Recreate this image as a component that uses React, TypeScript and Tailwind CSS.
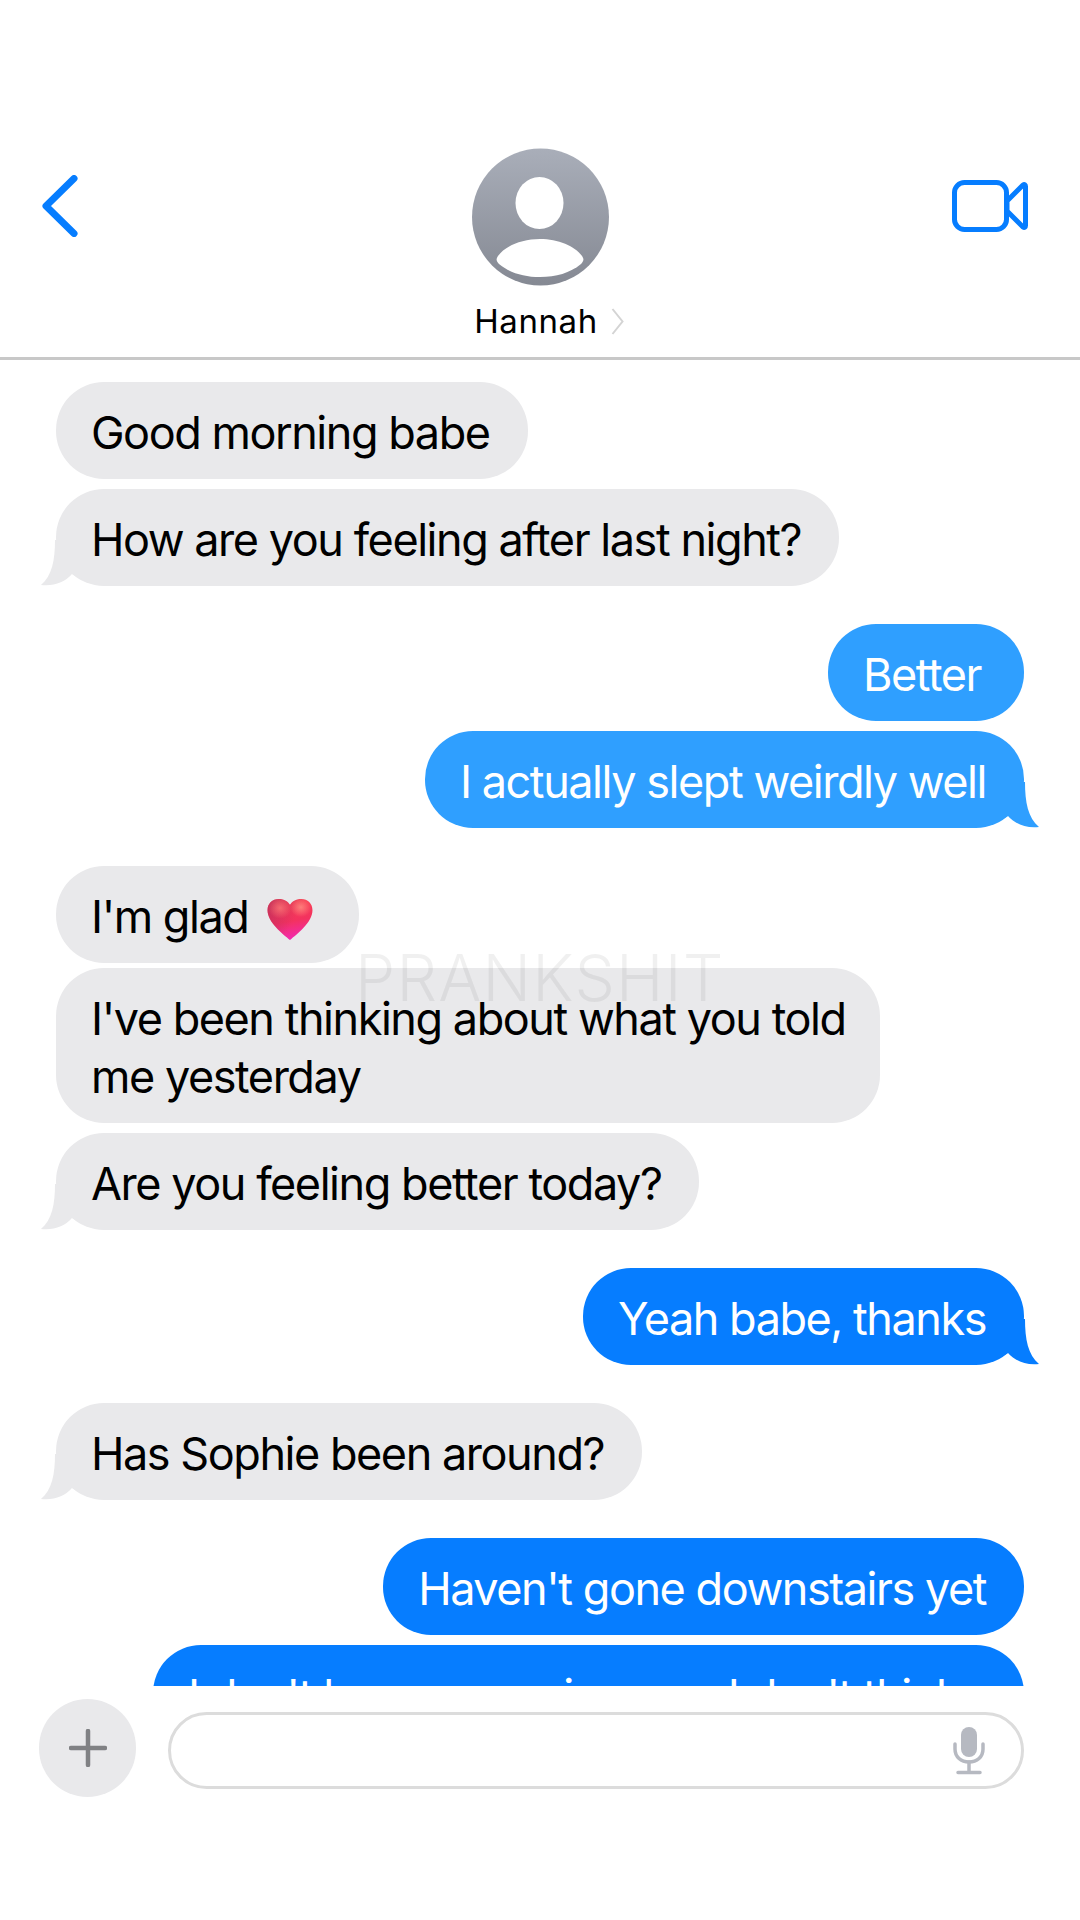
// iMessage style conversation
const FONT = "font-['Inter','Liberation_Sans',sans-serif]";

type Msg = {
  text: string;
  me?: boolean;
  tail?: boolean;
  blue?: 'light' | 'deep';
  heart?: boolean;
  gap?: 'group' | 'tight';
  width?: string;
};

const messages: Msg[] = [
  { text: 'Good morning babe' },
  { text: 'How are you feeling after last night?', tail: true },
  { text: 'Better', me: true, blue: 'light', gap: 'group', width: 'w-[196px]' },
  { text: 'I actually slept weirdly well', me: true, blue: 'light', tail: true },
  { text: "I'm glad", heart: true, gap: 'group' },
  { text: "I've been thinking about what you told\nme yesterday", gap: 'tight', width: 'w-[824px]' },
  { text: 'Are you feeling better today?', tail: true },
  { text: 'Yeah babe, thanks', me: true, blue: 'deep', tail: true, gap: 'group' },
  { text: 'Has Sophie been around?', tail: true, gap: 'group' },
  { text: "Haven't gone downstairs yet", me: true, blue: 'deep', gap: 'group' },
  { text: "I don't know, mum is up so I don't think", me: true, blue: 'deep', width: 'w-[871px]' },
];

function Tail({ className }: { className: string }) {
  return (
    <svg width="60" height="50" viewBox="40 540 60 50" fill="currentColor" className={className} aria-hidden="true">
      <path d="M56 542C56 562 53 578 42 587C55 588.5 66 584 73 576C78 579 84 582 92 585L92 542Z" />
    </svg>
  );
}

const HEART_PATH = 'M24 43C17 37 1 25 1 12.5C1 5.5 6 1 12.5 1C18 1 22 3.5 24 7C26 3.5 30 1 35.5 1C42 1 47 5.5 47 12.5C47 25 31 37 24 43Z';

function Heart() {
  return (
    <svg width="48" height="43" viewBox="0 0 48 44" className="mt-[5px] mr-[7px] ml-[18px] inline-block" aria-hidden="true">
      <defs>
        <linearGradient id="heart" x1="0.35" y1="0" x2="0.55" y2="1">
          <stop offset="0" stopColor="#fb4150" />
          <stop offset="0.55" stopColor="#f3325f" />
          <stop offset="1" stopColor="#f229b4" />
        </linearGradient>
        <radialGradient id="shineL" cx="0.28" cy="0.22" r="0.26">
          <stop offset="0" stopColor="#ff7a78" stopOpacity="0.75" />
          <stop offset="1" stopColor="#ff7a78" stopOpacity="0" />
        </radialGradient>
        <radialGradient id="shineR" cx="0.74" cy="0.2" r="0.24">
          <stop offset="0" stopColor="#ff8a80" stopOpacity="0.85" />
          <stop offset="1" stopColor="#ff8a80" stopOpacity="0" />
        </radialGradient>
        <linearGradient id="shade" x1="0" y1="0.3" x2="0.55" y2="0.6">
          <stop offset="0" stopColor="#a82a60" stopOpacity="0.55" />
          <stop offset="1" stopColor="#a82a60" stopOpacity="0" />
        </linearGradient>
      </defs>
      <path d={HEART_PATH} fill="url(#heart)" />
      <path d={HEART_PATH} fill="url(#shade)" />
      <path d={HEART_PATH} fill="url(#shineL)" />
      <path d={HEART_PATH} fill="url(#shineR)" />
    </svg>
  );
}

function Bubble({ msg, first }: { msg: Msg; first: boolean }) {
  const fill = msg.blue === 'light' ? 'bg-[#2f9fff] text-white' : msg.blue === 'deep' ? 'bg-[#067dff] text-white' : 'bg-[#e9e9eb] text-black';
  const tailColor = msg.blue === 'light' ? 'text-[#2f9fff]' : msg.blue === 'deep' ? 'text-[#067dff]' : 'text-[#e9e9eb]';
  const margin = first ? '' : msg.gap === 'group' ? 'mt-[38px]' : msg.gap === 'tight' ? 'mt-[5px]' : 'mt-[10px]';

  return (
    <div className={`flex ${msg.me ? 'justify-end' : 'justify-start'} ${margin}`}>
      <div className={`relative rounded-[48px] pt-[22px] pr-[38px] pb-[17px] pl-[36px] text-[45px] leading-[58px] tracking-[-1.45px] whitespace-pre ${msg.width ?? ''} ${fill}`}>
        {msg.tail && (
          <Tail
            className={`absolute bottom-[-2px] ${tailColor} ${msg.me ? 'right-[-17px] -scale-x-100' : 'left-[-17px]'}`}
          />
        )}
        <span className="relative -ml-[1px] flex items-center">
          <span>{msg.text}</span>
          {msg.heart && <Heart />}
        </span>
      </div>
    </div>
  );
}

function Avatar() {
  return (
    <svg width="137" height="138" viewBox="0 0 137 138" aria-hidden="true">
      <defs>
        <linearGradient id="avatar" x1="0" y1="0" x2="0" y2="1">
          <stop offset="0" stopColor="#a9aeb9" />
          <stop offset="1" stopColor="#858993" />
        </linearGradient>
      </defs>
      <circle cx="68.5" cy="69" r="68.5" fill="url(#avatar)" />
      <ellipse cx="67.5" cy="55" rx="24" ry="26" fill="white" />
      <path
        d="M26 108C33 98 50 91 68 91C86 91 103 98 110 108C112 111 112 113 109 116C98 125 84 129 68 129C52 129 38 125 27 116C24 113 24 111 26 108Z"
        fill="white"
      />
    </svg>
  );
}

export default function App() {
  return (
    <div className={`relative h-[1920px] w-[1080px] overflow-hidden bg-white ${FONT}`}>
      <header className="grid h-[360px] grid-cols-[430px_137px_1fr] items-start border-b-[3px] border-[#c8c8c8] pr-[52px] pl-[42px]">
        <svg width="36" height="62" viewBox="0 0 36 62" fill="none" stroke="#067dff" strokeWidth="7" strokeLinecap="round" strokeLinejoin="round" className="mt-[175px]" aria-hidden="true">
          <path d="M32 3.5L4 31L32 58.5" />
        </svg>
        <div className="flex flex-col items-center pt-[148px]">
          <Avatar />
          <div className="mt-[12px] flex items-center gap-[13px] pl-[17px] text-[33px] leading-[46px] tracking-[0.6px] whitespace-nowrap text-black">
            <span>Hannah</span>
            <svg width="13" height="27" viewBox="0 0 13 27" fill="none" stroke="#d4d4d4" strokeWidth="2" aria-hidden="true">
              <path d="M1.5 1L11.5 13.5L1.5 26" />
            </svg>
          </div>
        </div>
        <svg width="76" height="52" viewBox="0 0 76 52" fill="none" stroke="#067dff" strokeWidth="5" strokeLinejoin="round" className="mt-[180px] justify-self-end" aria-hidden="true">
          <rect x="2.5" y="2.5" width="52" height="47" rx="10" />
          <path d="M55 21L71 5C72.5 4 73.5 5 73.5 6.5V45.5C73.5 47 72.5 48 71 47L55 31Z" />
        </svg>
      </header>

      <main className="h-[1326px] overflow-hidden px-[56px] pt-[22px]">
        {messages.map((msg, i) => (
          <Bubble key={i} msg={msg} first={i === 0} />
        ))}
      </main>

      <footer className="mt-[13px] flex items-center gap-[32px] pr-[56px] pl-[39px]">
        <div className="flex h-[98px] w-[97px] shrink-0 items-center justify-center rounded-full bg-[#e9e9eb]">
          <svg width="38" height="38" viewBox="0 0 38 38" fill="none" stroke="#808184" strokeWidth="4.5" strokeLinecap="round" aria-hidden="true">
            <path d="M19 2V36M2 19H36" />
          </svg>
        </div>
        <div className="mt-[5px] flex h-[77px] flex-1 items-center justify-end rounded-full border-[3px] border-[#dcdcdc] pr-[36px]">
          <svg width="32" height="48" viewBox="0 0 32 48" fill="none" aria-hidden="true">
            <rect x="8" y="0" width="16" height="30" rx="8" fill="#b6b9c1" />
            <path d="M2 17V22C2 30 8 35 16 35C24 35 30 30 30 22V17" stroke="#b6b9c1" strokeWidth="3.5" strokeLinecap="round" />
            <path d="M16 35V45M5 45.5H27" stroke="#b6b9c1" strokeWidth="3.5" strokeLinecap="round" />
          </svg>
        </div>
      </footer>

      {/* watermark */}
      <div className="pointer-events-none absolute top-[943px] left-[355px] text-[64px] leading-[70px] font-light tracking-[1.2px] text-black/[0.06]">
        PRANKSHIT
      </div>
    </div>
  );
}
